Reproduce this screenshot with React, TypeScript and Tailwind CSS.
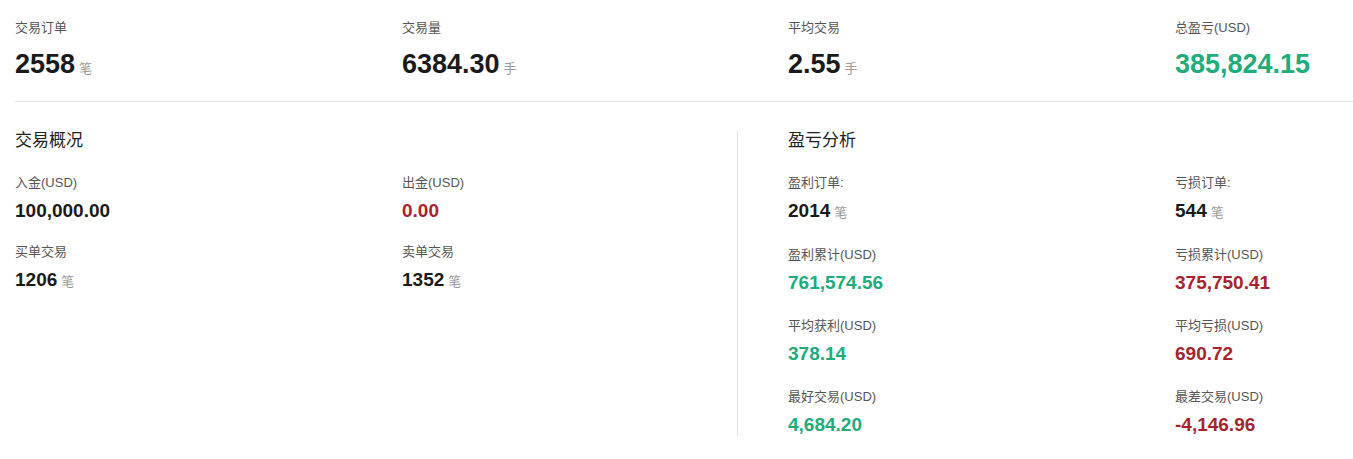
import React from "react";

const G = "text-[#20ac7b]";
const R = "text-[#a6242e]";

function Stat({ label, value, unit, color = "text-[#1a1a1a]", big = false }: { label: string; value: string; unit?: string; color?: string; big?: boolean }) {
  return (
    <div>
      <div className="text-[13px] leading-[16px] text-[#555]">{label}</div>
      <div className={`flex items-baseline ${big ? "mt-[12px]" : "mt-[9px]"}`}>
        <span className={`font-bold ${big ? "text-[27px] leading-[32px]" : "text-[19px] leading-[22px]"} ${color}`}>{value}</span>
        {unit && <span className="ml-[4px] text-[13px] text-[#999]">{unit}</span>}
      </div>
    </div>
  );
}

export default function App() {
  return (
    <div className="bg-white w-[1353px] h-[459px] pl-[15px] pt-[20px]" style={{ fontFamily: '"Liberation Sans", Arial, "Noto Sans CJK SC", sans-serif' }}>
      <div className="grid grid-cols-[387px_386px_387px_1fr] pb-[21px] border-b border-[#e3e3e3]">
        <Stat big label="交易订单" value="2558" unit="笔" />
        <Stat big label="交易量" value="6384.30" unit="手" />
        <Stat big label="平均交易" value="2.55" unit="手" />
        <Stat big label="总盈亏(USD)" value="385,824.15" color={G} />
      </div>
      <div className="flex pt-[28px]">
        <div className="w-[723px] border-r border-[#e3e3e3] h-[306px]">
          <div className="text-[17px] leading-[22px] text-[#222]">交易概况</div>
          <div className="grid grid-cols-[387px_1fr] gap-y-[22px] mt-[23px]">
            <Stat label="入金(USD)" value="100,000.00" />
            <Stat label="出金(USD)" value="0.00" color={R} />
            <Stat label="买单交易" value="1206" unit="笔" />
            <Stat label="卖单交易" value="1352" unit="笔" />
          </div>
        </div>
        <div className="pl-[50px] flex-1">
          <div className="text-[17px] leading-[22px] text-[#222]">盈亏分析</div>
          <div className="grid grid-cols-[387px_1fr] gap-y-[24px] mt-[23px]">
            <Stat label="盈利订单:" value="2014" unit="笔" />
            <Stat label="亏损订单:" value="544" unit="笔" />
            <Stat label="盈利累计(USD)" value="761,574.56" color={G} />
            <Stat label="亏损累计(USD)" value="375,750.41" color={R} />
            <Stat label="平均获利(USD)" value="378.14" color={G} />
            <Stat label="平均亏损(USD)" value="690.72" color={R} />
            <Stat label="最好交易(USD)" value="4,684.20" color={G} />
            <Stat label="最差交易(USD)" value="-4,146.96" color={R} />
          </div>
        </div>
      </div>
    </div>
  );
}
